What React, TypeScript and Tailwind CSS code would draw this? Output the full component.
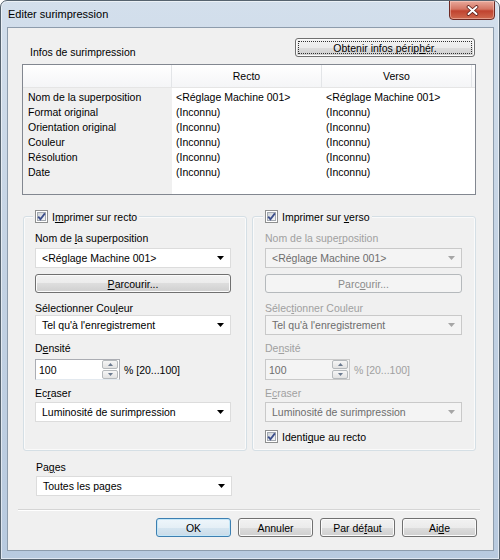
import React from "react";
import clsx from "clsx";

// mnemonic underline
const U = ({ children }: { children: React.ReactNode }) => (
  <span className="underline decoration-1 underline-offset-[1px]">{children}</span>
);

const ROWS = [
  "Nom de la superposition",
  "Format original",
  "Orientation original",
  "Couleur",
  "Résolution",
  "Date",
];
const VALUES = [
  "<Réglage Machine 001>",
  "(Inconnu)",
  "(Inconnu)",
  "(Inconnu)",
  "(Inconnu)",
  "(Inconnu)",
];

function Tri({ dim }: { dim?: boolean }) {
  return (
    <svg width="7" height="4" viewBox="0 0 7 4">
      <polygon points="0,0 7,0 3.5,4" fill={dim ? "#a6a6a6" : "#000"} />
    </svg>
  );
}

function Check() {
  return (
    <span className="relative flex h-[13px] w-[13px] shrink-0 items-center justify-center border border-[#8e8f8f] bg-white">
      <span className="h-[9px] w-[9px] border border-[#a4a9b1] bg-linear-to-br from-[#cfd3d9] to-[#f7f7f7]" />
      <svg className="absolute left-0 top-0" width="11" height="11" viewBox="0 0 11 11">
        <path d="M2.2 5.6 L4.4 8.2 L8.9 2.4" fill="none" stroke="#3c4f8c" strokeWidth="1.8" />
      </svg>
    </span>
  );
}

function Btn({
  children,
  className,
  focus,
  def,
  dim,
}: {
  children: React.ReactNode;
  className?: string;
  focus?: boolean;
  def?: boolean;
  dim?: boolean;
}) {
  return (
    <div
      className={clsx(
        "relative flex h-[19px] items-center justify-center rounded-[3px] border leading-[12px]",
        dim
          ? "border-[#b5b9bc] bg-[#f4f4f4] text-[#8a8a8a]"
          : def
            ? "border-[#3c7fb1] bg-[linear-gradient(#eef6fb,#e5eff6_50%,#d6e6f1_50%,#cadbe8)] text-black shadow-[inset_0_0_0_1px_#c4e7f8]"
            : "border-[#707070] bg-[linear-gradient(#f2f2f2,#ebebeb_50%,#dddddd_50%,#cfcfcf)] text-black shadow-[inset_0_0_0_1px_#fbfbfb]",
        className,
      )}
    >
      {focus && <span className="absolute inset-[2px] border border-dotted border-[#303030]" />}
      <span className="relative">{children}</span>
    </div>
  );
}

function Combo({ value, dim, className }: { value: string; dim?: boolean; className?: string }) {
  return (
    <div
      className={clsx(
        "flex h-[20px] items-center justify-between border pl-[6px] pr-[6px]",
        dim ? "border-[#c9c9c9] bg-[#f4f4f4] text-[#6d6d6d]" : "border-[#dcdcdc] bg-white text-black",
        className,
      )}
    >
      <span className="leading-[12px]">{value}</span>
      <Tri dim={dim} />
    </div>
  );
}

function SpinArrow({ up }: { up?: boolean }) {
  return (
    <svg width="5" height="3" viewBox="0 0 5 3">
      <polygon points={up ? "0,3 5,3 2.5,0" : "0,0 5,0 2.5,3"} fill="#6b7a8f" />
    </svg>
  );
}

function Spin({ dim }: { dim?: boolean }) {
  return (
    <div className="mt-[5px] flex items-center">
      <div
        className={clsx(
          "flex h-[21px] w-[85px] items-center border pl-[3px] pr-[1px]",
          dim ? "border-[#c9c9c9] bg-[#f4f4f4] text-[#6d6d6d]" : "border-[#abadb3] border-b-[#e3e9ef] bg-white",
        )}
      >
        <span className="flex-1 leading-[12px]">100</span>
        <div className="flex h-[19px] w-[16px] flex-col gap-[1px]">
          <div className="flex flex-1 items-center justify-center rounded-[2px] border border-[#b5b9bc] bg-linear-to-b from-[#f6f6f6] to-[#e2e2e2]">
            <SpinArrow up />
          </div>
          <div className="flex flex-1 items-center justify-center rounded-[2px] border border-[#b5b9bc] bg-linear-to-b from-[#f6f6f6] to-[#e2e2e2]">
            <SpinArrow />
          </div>
        </div>
      </div>
      <span className={clsx("ml-[4px] leading-[12px]", dim ? "text-[#a0a0a0]" : "text-black")}>% [20...100]</span>
    </div>
  );
}

function Label({ children, dim, className }: { children: React.ReactNode; dim?: boolean; className?: string }) {
  return (
    <div className={clsx("leading-[12px]", dim ? "text-[#a0a0a0]" : "text-black", className)}>{children}</div>
  );
}

function InfoTable() {
  return (
    <div className="ml-[14px] mt-[6px] w-[454px] border border-[#828790] bg-white">
      <div className="flex h-[23px] border-b border-[#e5e5e5] bg-linear-to-b from-white to-[#f4f5f7]">
        <div className="w-[149px] border-r border-[#e3e5e8]" />
        <div className="flex w-[150px] items-center justify-center border-r border-[#e3e5e8]">Recto</div>
        <div className="flex w-[150px] items-center justify-center border-r border-[#e3e5e8]">Verso</div>
      </div>
      <div className="flex h-[106px]">
        <div className="w-[149px] bg-[#f0f0f0] pl-[5px] pt-[2px]">
          {ROWS.map((r) => (
            <div key={r} className="h-[15px] leading-[15px]">
              {r}
            </div>
          ))}
        </div>
        <div className="w-[150px] pl-[4px] pt-[2px]">
          {VALUES.map((v, i) => (
            <div key={i} className="h-[15px] leading-[15px]">
              {v}
            </div>
          ))}
        </div>
        <div className="w-[150px] pl-[4px] pt-[2px]">
          {VALUES.map((v, i) => (
            <div key={i} className="h-[15px] leading-[15px]">
              {v}
            </div>
          ))}
        </div>
      </div>
    </div>
  );
}

function Group({
  legend,
  children,
  className,
}: {
  legend: React.ReactNode;
  children: React.ReactNode;
  className?: string;
}) {
  return (
    <fieldset
      className={clsx(
        "w-[224px] rounded-[3px] border border-[#d5dfe5] pb-[7px] pt-[9px] shadow-[inset_0_0_0_1px_#fafafa]",
        className,
      )}
    >
      <legend className="-ml-[2px] bg-[#f0f0f0] px-[2px]">
        <span className="flex h-[13px] items-center gap-[4px] leading-[12px]">
          <Check />
          {legend}
        </span>
      </legend>
      {children}
    </fieldset>
  );
}

export default function App() {
  return (
    <div className="relative h-[560px] w-[500px] overflow-hidden rounded-t-[7px] border border-[#56636f] bg-linear-to-b from-[#d3dfec] via-[#c3d2e3] to-[#b8cadf] text-[10.5px] leading-[12px] text-black font-['Liberation_Sans',Arial,sans-serif] shadow-[inset_0_0_0_1px_rgba(255,255,255,0.55)]">
      {/* title bar */}
      <div className="relative h-[26px] pl-[7px] pt-[7px]">
        <span className="text-[11px] leading-[12px] text-black">Editer surimpression</span>
        <div className="absolute right-[4px] top-[-1px] flex h-[20px] w-[46px] items-center justify-center rounded-b-[4px] border border-[#6e2a24] bg-[linear-gradient(#e9a99b,#d47563_45%,#c0432f_55%,#cf6a4f)] shadow-[inset_0_0_0_1px_rgba(255,220,210,0.45)]">
          <svg width="13" height="11" viewBox="0 0 13 11">
            <path d="M2.5 2 L10.5 9 M10.5 2 L2.5 9" stroke="#5a1d18" strokeWidth="3.6" strokeLinecap="round" />
            <path d="M2.5 2 L10.5 9 M10.5 2 L2.5 9" stroke="#ffffff" strokeWidth="2" strokeLinecap="round" />
          </svg>
        </div>
      </div>

      {/* client area */}
      <div className="ml-[6px] mr-[5px] h-[524px] border border-[#8d9cac] bg-[#f0f0f0]">
        <div className="flex justify-between pl-[22px] pr-[18px] pt-[10px]">
          <div className="mt-[8px] leading-[12px]">Infos de surimpression</div>
          <Btn className="w-[180px]" focus>
            Obtenir infos périp<U>h</U>ér.
          </Btn>
        </div>

        <InfoTable />

        <div className="ml-[15px] mt-[15px] flex gap-[5px]">
          <Group
            className="pl-[11px]"
            legend={
              <span>
                I<U>m</U>primer sur recto
              </span>
            }
          >
            <Label>
              Nom de <U>l</U>a superposition
            </Label>
            <Combo className="mt-[4px] w-[196px]" value="<Réglage Machine 001>" />
            <Btn className="mt-[6px] w-[196px]">
              <U>P</U>arcourir...
            </Btn>
            <Label className="mt-[9px]">
              Sélectionner Cou<U>l</U>eur
            </Label>
            <Combo className="mt-[1px] w-[196px]" value="Tel qu'à l'enregistrement" />
            <Label className="mt-[7px]">
              D<U>e</U>nsité
            </Label>
            <Spin />
            <Label className="mt-[7px]">
              Ec<U>r</U>aser
            </Label>
            <Combo className="mt-[3px] w-[196px]" value="Luminosité de surimpression" />
          </Group>

          <Group
            className="pl-[12px]"
            legend={
              <span>
                Imprimer sur <U>v</U>erso
              </span>
            }
          >
            <Label dim>
              Nom de la supe<U>r</U>position
            </Label>
            <Combo dim className="mt-[4px] w-[197px]" value="<Réglage Machine 001>" />
            <Btn dim className="mt-[6px] w-[197px]">
              Parc<U>o</U>urir...
            </Btn>
            <Label dim className="mt-[9px]">
              Sélec<U>t</U>ionner Couleur
            </Label>
            <Combo dim className="mt-[1px] w-[197px]" value="Tel qu'à l'enregistrement" />
            <Label dim className="mt-[7px]">
              De<U>n</U>sité
            </Label>
            <Spin dim />
            <Label dim className="mt-[7px]">
              E<U>c</U>raser
            </Label>
            <Combo dim className="mt-[3px] w-[197px]" value="Luminosité de surimpression" />
            <div className="mt-[8px] flex h-[13px] items-center gap-[4px]">
              <Check />
              <span className="leading-[12px]">
                Identi<U>q</U>ue au recto
              </span>
            </div>
          </Group>
        </div>

        <Label className="ml-[28px] mt-[10px]">
          Pa<U>g</U>es
        </Label>
        <Combo className="ml-[28px] mt-[3px] w-[196px]" value="Toutes les pages" />

        <div className="ml-[10px] mt-[13px] w-[462px] border-b border-t border-b-white border-t-[#d5d5d5]" />

        <div className="mt-[7px] flex justify-end gap-[7px] pr-[16px]">
          <Btn def className="w-[75px]">
            OK
          </Btn>
          <Btn className="w-[75px]">Annuler</Btn>
          <Btn className="w-[75px]">
            Par dé<U>f</U>aut
          </Btn>
          <Btn className="w-[75px]">
            Ai<U>d</U>e
          </Btn>
        </div>
      </div>
    </div>
  );
}
